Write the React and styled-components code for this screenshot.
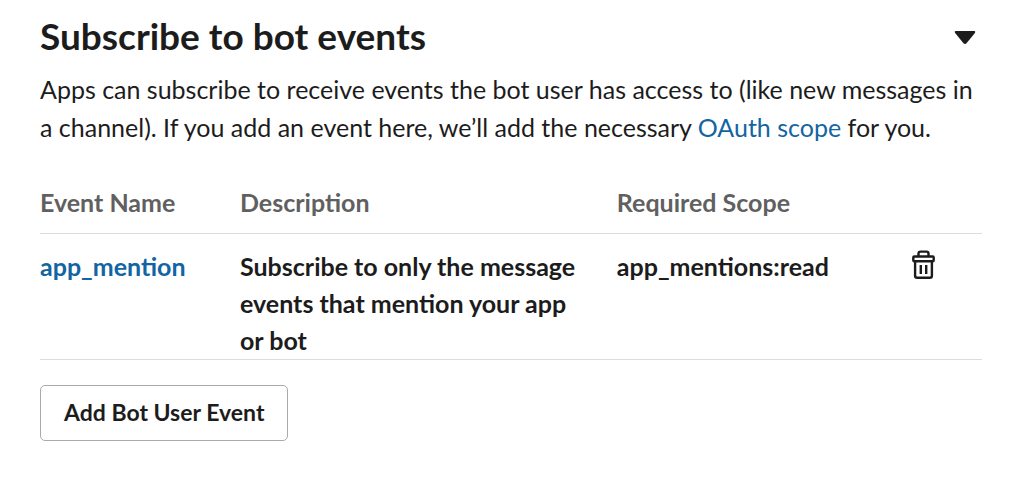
import React from "react";
import styled, { createGlobalStyle } from "styled-components";

const Global = createGlobalStyle`
  *, *::before, *::after { box-sizing: border-box; }
  body {
    margin: 0;
    background: #fff;
    color: #1d1c1d;
    font-family: Lato, "Open Sans", sans-serif;
    font-size: 25px;
    line-height: 38px;
  }
`;

const Section = styled.section`
  padding: 11px 40px 40px;
`;

const Header = styled.header`
  display: flex;
  align-items: center;
  justify-content: space-between;
  padding-right: 6px;
`;

const Title = styled.h2`
  margin: 0;
  font-size: 37px;
  line-height: 50px;
  font-weight: 700;
`;

const Toggle = styled.button`
  display: flex;
  padding: 0;
  border: 0;
  background: none;
  color: inherit;
  cursor: pointer;
`;

const Intro = styled.p`
  margin: 9px 0 0;
`;

const Link = styled.a`
  color: #1264a3;
  text-decoration: none;
`;

const Table = styled.table`
  width: 100%;
  margin-top: 38px;
  border-collapse: collapse;
  table-layout: fixed;
  line-height: 37px;
`;

const Col = styled.col`
  width: ${(p) => p.$width};
`;

const HeadCell = styled.th`
  padding: 0 0 12px;
  border-bottom: 1px solid #ddd;
  color: #616061;
  font-weight: 700;
  text-align: left;
`;

const Cell = styled.td`
  padding: 14px 0 0;
  border-bottom: 1px solid #ddd;
  font-weight: 700;
  text-align: left;
  vertical-align: top;
`;

const Description = styled.div`
  max-width: 350px;
`;

const IconButton = styled(Toggle)`
  padding-top: 2px;
`;

const AddButton = styled.button`
  margin-top: 25px;
  padding: 0 23px 2px;
  height: 56px;
  border: 1px solid #aaa;
  border-radius: 5px;
  background: #fff;
  color: inherit;
  font: inherit;
  font-size: 23px;
  font-weight: 700;
  cursor: pointer;
`;

const Caret = () => (
  <svg width="22" height="18" viewBox="0 -4 22 18" aria-hidden="true">
    <path d="M1.500 0h19q1.500 .6 .4 2L12.500 12.300q-1.500 1.400-3 0L1.100 2Q0 .6 1.500 0z" fill="currentColor" />
  </svg>
);

const Trash = () => (
  <svg width="23" height="30" viewBox="0 0 23 30" fill="none" stroke="currentColor" strokeWidth="2.4" strokeLinejoin="round" aria-hidden="true">
    <path d="M6.500 6.500V3.600q0-2 2-2h6q2 0 2 2v2.900" />
    <rect x="1.300" y="6.500" width="20.400" height="4.800" rx="1" />
    <path d="M3.100 11.300v14.500q0 2 2 2h12.800q2 0 2-2V11.300" />
    <path d="M8.800 15v9M14.200 15v9" />
  </svg>
);

export default function App() {
  return (
    <>
      <Global />
      <Section>
        <Header>
          <Title>Subscribe to bot events</Title>
          <Toggle aria-label="Collapse section" aria-expanded="true">
            <Caret />
          </Toggle>
        </Header>
        <Intro>
          Apps can subscribe to receive events the bot user has access to (like new messages in a
          channel). If you add an event here, we’ll add the necessary{" "}
          <Link href="#oauth">OAuth scope</Link> for you.
        </Intro>
        <Table>
          <colgroup>
            <Col $width="200px" />
            <Col $width="40%" />
            <Col />
            <Col $width="70px" />
          </colgroup>
          <thead>
            <tr>
              <HeadCell scope="col">Event Name</HeadCell>
              <HeadCell scope="col">Description</HeadCell>
              <HeadCell scope="col">Required Scope</HeadCell>
              <HeadCell aria-label="Actions" />
            </tr>
          </thead>
          <tbody>
            <tr>
              <Cell><Link href="#app_mention">app_mention</Link></Cell>
              <Cell>
                <Description>Subscribe to only the message events that mention your app or bot</Description>
              </Cell>
              <Cell>app_mentions:read</Cell>
              <Cell>
                <IconButton aria-label="Delete event">
                  <Trash />
                </IconButton>
              </Cell>
            </tr>
          </tbody>
        </Table>
        <AddButton>Add Bot User Event</AddButton>
      </Section>
    </>
  );
}
